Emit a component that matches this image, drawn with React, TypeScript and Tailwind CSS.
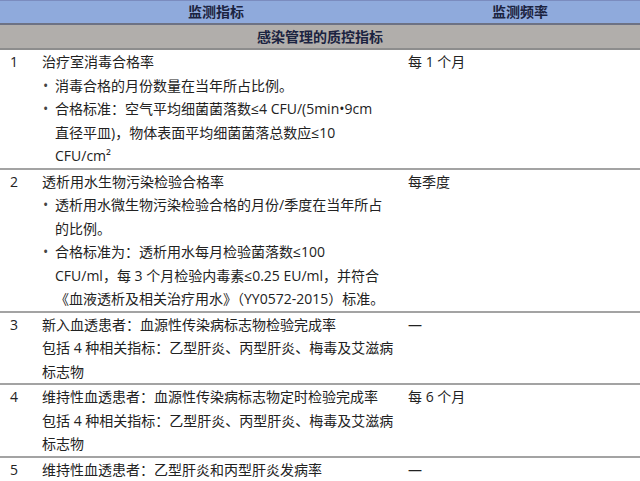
import React from "react";

const Bullet = ({ lines }: { lines: string[] }) => (
  <div className="flex">
    <span className="w-[13px] shrink-0 pl-[1px] text-[#444]">•</span>
    <div>
      {lines.map((l, i) => (
        <div key={i} className="whitespace-nowrap">{l}</div>
      ))}
    </div>
  </div>
);

const Row = ({
  n,
  children,
  freq,
}: {
  n: string;
  children: React.ReactNode;
  freq: string;
}) => (
  <div className="grid grid-cols-[42px_366px_1fr] border-b-2 border-[#a3a3a3]">
    <div className="pl-[10px]">{n}</div>
    <div>{children}</div>
    <div className="whitespace-nowrap">{freq}</div>
  </div>
);

const L = ({ children }: { children: React.ReactNode }) => (
  <div className="whitespace-nowrap">{children}</div>
);

export default function App() {
  return (
    <div className="w-[640px] h-[481px] overflow-hidden bg-white text-[14px] leading-[23.5px] text-[#222] font-['Open_Sans','Noto_Sans_CJK_SC',sans-serif]">
      <div className="flex h-[25px] items-center bg-[#8faadc] border-t border-[#7b8cbf] border-b-2 border-b-[#6d7284] font-bold text-[#1b2340]">
        <div className="ml-[32px] w-[368px] text-center">监测指标</div>
        <div className="flex-1 text-center">监测频率</div>
      </div>
      <div className="flex h-[25px] items-center justify-center bg-[#b1aeab] border-b-2 border-[#8d8d8d] font-bold text-[#1b2340]">
        感染管理的质控指标
      </div>
      <Row n="1" freq="每 1 个月">
        <L>治疗室消毒合格率</L>
        <Bullet lines={["消毒合格的月份数量在当年所占比例。"]} />
        <Bullet
          lines={[
            "合格标准：空气平均细菌菌落数≤4 CFU/(5min•9cm",
            "直径平皿)，物体表面平均细菌菌落总数应≤10",
            "CFU/cm²",
          ]}
        />
      </Row>
      <Row n="2" freq="每季度">
        <L>透析用水生物污染检验合格率</L>
        <Bullet lines={["透析用水微生物污染检验合格的月份/季度在当年所占", "的比例。"]} />
        <Bullet
          lines={[
            "合格标准为：透析用水每月检验菌落数≤100",
            "CFU/ml，每 3 个月检验内毒素≤0.25 EU/ml，并符合",
            "《血液透析及相关治疗用水》（YY0572-2015）标准。",
          ]}
        />
      </Row>
      <Row n="3" freq="—">
        <L>新入血透患者：血源性传染病标志物检验完成率</L>
        <L>包括 4 种相关指标：乙型肝炎、丙型肝炎、梅毒及艾滋病</L>
        <L>标志物</L>
      </Row>
      <Row n="4" freq="每 6 个月">
        <L>维持性血透患者：血源性传染病标志物定时检验完成率</L>
        <L>包括 4 种相关指标：乙型肝炎、丙型肝炎、梅毒及艾滋病</L>
        <L>标志物</L>
      </Row>
      <Row n="5" freq="—">
        <L>维持性血透患者：乙型肝炎和丙型肝炎发病率</L>
      </Row>
    </div>
  );
}
